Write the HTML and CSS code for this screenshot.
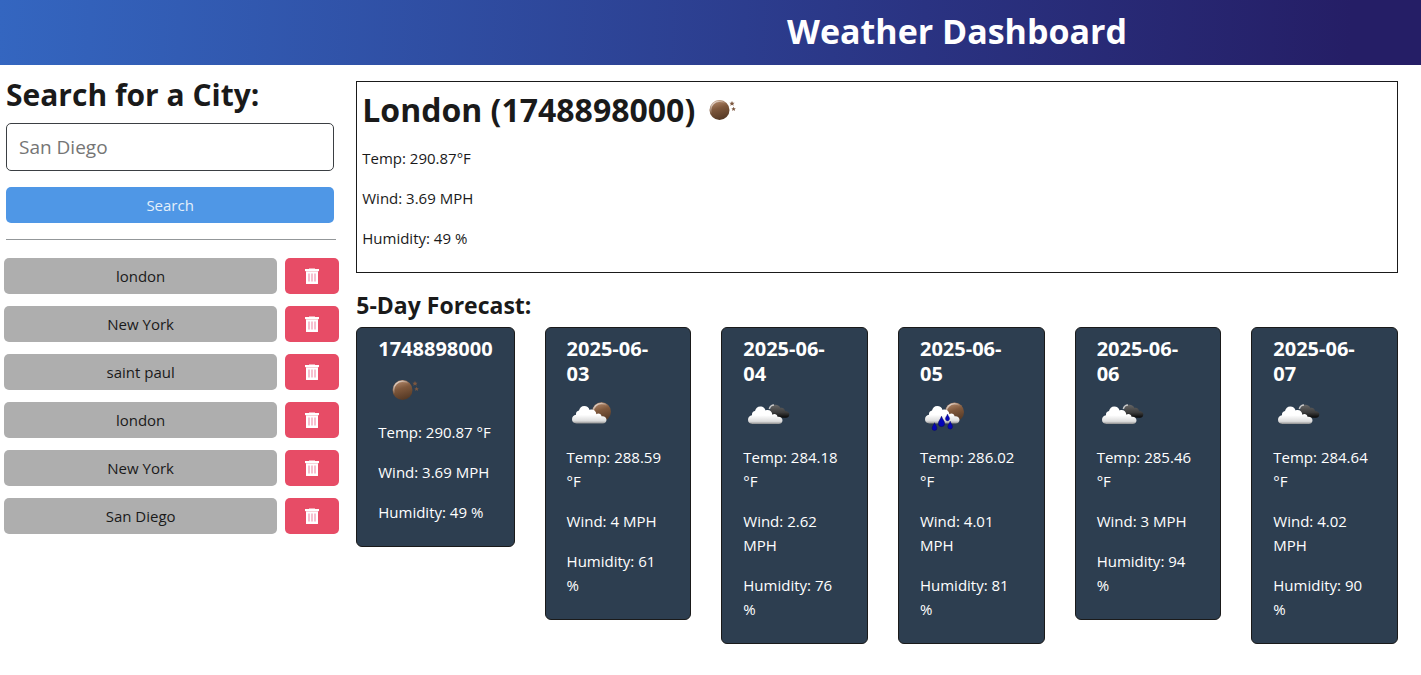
FILE: index.html
```
<!DOCTYPE html>
<html lang="en">
<head>
<meta charset="utf-8">
<meta name="viewport" content="width=device-width, initial-scale=1">
<title>Weather Dashboard</title>
<link rel="stylesheet" href="styles.css">
</head>
<body>
<svg class="sprite" aria-hidden="true">
  <defs>
    <linearGradient id="moonFill" x1="0.2" y1="0" x2="0.5" y2="1">
      <stop offset="0" stop-color="#b98e70"/>
      <stop offset="0.45" stop-color="#7f583c"/>
      <stop offset="1" stop-color="#553925"/>
    </linearGradient>
    <linearGradient id="moonShine" x1="0" y1="0" x2="0.6" y2="0.8">
      <stop offset="0" stop-color="#fff" stop-opacity="0.9"/>
      <stop offset="0.6" stop-color="#fff" stop-opacity="0"/>
    </linearGradient>
    <linearGradient id="cloudFill" x1="0" y1="0" x2="0" y2="1">
      <stop offset="0.5" stop-color="#fff"/>
      <stop offset="0.85" stop-color="#dcdcdc"/>
      <stop offset="1" stop-color="#8f8f8f"/>
    </linearGradient>
    <linearGradient id="darkFill" x1="0" y1="0" x2="0" y2="1">
      <stop offset="0" stop-color="#666"/>
      <stop offset="0.6" stop-color="#3c3c3c"/>
      <stop offset="1" stop-color="#080808"/>
    </linearGradient>
    <g id="disc">
      <circle r="10" fill="url(#moonFill)"/>
      <circle r="8.8" fill="none" stroke="url(#moonShine)" stroke-width="1.6"/>
    </g>
    <path id="cloud" d="M9.500 33.500C6.500 33.500 5 31.600 5 29.300C5 26.800 6.600 25.200 9 24.800C8.600 22.300 10.300 20.800 12 20.600C12.600 17.800 14.600 16 17.200 16C20 16 21.800 17.600 22.600 19.900C26 18.800 29 20.600 29.400 24.200C31.500 22.700 34.300 24 34.500 26.200C37.500 25.800 39.500 27.500 39.500 29.700C39.500 32 38 33.500 35.500 33.500Z" fill="url(#cloudFill)"/>
    <path id="drop" d="M0 0C.8 2.800 2.800 4.200 2.800 6.400A2.800 2.800 0 0 1-2.800 6.400C-2.800 4.200-.8 2.800 0 0Z" fill="#0505b8" stroke="#050560" stroke-width="0.5"/>
    <path id="star" d="M0-2.600L.8-.8L2.600-.7L1.200.5L1.700 2.300L0 1.300L-1.700 2.300L-1.200.5L-2.600-.7L-.8-.8Z" fill="#7c573f"/>
    <symbol id="clear" viewBox="0 0 50 50">
      <use href="#disc" x="24.5" y="25"/>
      <use href="#star" x="37" y="18.5"/>
      <use href="#star" transform="translate(38.6 24) scale(.85)"/>
    </symbol>
    <symbol id="few" viewBox="0 0 50 50">
      <use href="#disc" transform="translate(34.5 21.8) scale(.95)"/>
      <use href="#cloud"/>
    </symbol>
    <symbol id="broken" viewBox="0 0 50 50">
      <path d="M29 27.500C26 26 25.500 22 27.500 20C27.500 16.500 30 14.500 33 14.800C35.500 15 37 16.600 37.500 18C40 17.400 41.800 19 42 21C45 21 46.500 22.800 46.300 24.800C46.200 26.600 44.800 27.700 43 27.700Z" fill="url(#darkFill)"/>
      <path d="M26.300 19C27 16.500 29 15 31 15" fill="none" stroke="#c9c9c9" stroke-width="1.5"/>
      <use href="#cloud" y="0.5"/>
    </symbol>
    <symbol id="rain" viewBox="0 0 50 50">
      <use href="#disc" transform="translate(34.5 22) scale(.95)"/>
      <use href="#cloud"/>
      <use href="#drop" transform="translate(14.5 32.7) scale(.85)"/>
      <use href="#drop" transform="translate(21.5 26.3) scale(1.12)"/>
      <use href="#drop" transform="translate(27.5 24) scale(.75)"/>
      <use href="#drop" transform="translate(30.2 31.2) scale(.85)"/>
    </symbol>
    <symbol id="trash" viewBox="0 0 16 16">
      <path d="M5 1V.5h6V1h4v2H1V1Z" fill="#fff"/>
      <path d="M2 3h12v12.500a.5.500 0 0 1-.5.500h-11a.5.500 0 0 1-.5-.5Z" fill="#fff"/>
      <path d="M1.500 3.500h13" stroke="#f4b3c0" stroke-width=".6"/>
      <path d="M5 5.500v8M8 5.500v8M11 5.500v8" stroke="#f08ba8" stroke-width="1.1"/>
    </symbol>
  </defs>
</svg>

<header class="header"><h1 class="header-title">Weather Dashboard</h1></header>

<div class="layout">
  <aside class="sidebar">
    <form class="search">
      <label class="search-label" for="city">Search for a City:</label>
      <input class="search-input" id="city" type="text" placeholder="San Diego">
      <button class="search-button" type="button">Search</button>
    </form>
    <hr class="divider">
    <ul class="history">
      <li class="history-row"><button class="city" type="button">london</button><button class="delete" type="button" aria-label="Delete london"><svg class="trash"><use href="#trash"/></svg></button></li>
      <li class="history-row"><button class="city" type="button">New York</button><button class="delete" type="button" aria-label="Delete New York"><svg class="trash"><use href="#trash"/></svg></button></li>
      <li class="history-row"><button class="city" type="button">saint paul</button><button class="delete" type="button" aria-label="Delete saint paul"><svg class="trash"><use href="#trash"/></svg></button></li>
      <li class="history-row"><button class="city" type="button">london</button><button class="delete" type="button" aria-label="Delete london"><svg class="trash"><use href="#trash"/></svg></button></li>
      <li class="history-row"><button class="city" type="button">New York</button><button class="delete" type="button" aria-label="Delete New York"><svg class="trash"><use href="#trash"/></svg></button></li>
      <li class="history-row"><button class="city" type="button">San Diego</button><button class="delete" type="button" aria-label="Delete San Diego"><svg class="trash"><use href="#trash"/></svg></button></li>
    </ul>
  </aside>

  <main class="main">
    <section class="today">
      <h2 class="today-title">London (1748898000)<svg class="today-icon" viewBox="0 5 50 40"><use href="#clear" width="50" height="50"/></svg></h2>
      <p class="reading">Temp: 290.87°F</p>
      <p class="reading">Wind: 3.69 MPH</p>
      <p class="reading">Humidity: 49 %</p>
    </section>
    <h2 class="forecast-title">5-Day Forecast:</h2>
    <section class="forecast">
      <article class="card">
        <h3 class="card-date">1748898000</h3>
        <svg class="card-icon"><use href="#clear"/></svg>
        <p class="reading">Temp: 290.87 °F</p>
        <p class="reading">Wind: 3.69 MPH</p>
        <p class="reading">Humidity: 49 %</p>
      </article>
      <article class="card">
        <h3 class="card-date">2025-06-03</h3>
        <svg class="card-icon"><use href="#few"/></svg>
        <p class="reading">Temp: 288.59 °F</p>
        <p class="reading">Wind: 4 MPH</p>
        <p class="reading">Humidity: 61 %</p>
      </article>
      <article class="card">
        <h3 class="card-date">2025-06-04</h3>
        <svg class="card-icon"><use href="#broken"/></svg>
        <p class="reading">Temp: 284.18 °F</p>
        <p class="reading">Wind: 2.62 MPH</p>
        <p class="reading">Humidity: 76 %</p>
      </article>
      <article class="card">
        <h3 class="card-date">2025-06-05</h3>
        <svg class="card-icon"><use href="#rain"/></svg>
        <p class="reading">Temp: 286.02 °F</p>
        <p class="reading">Wind: 4.01 MPH</p>
        <p class="reading">Humidity: 81 %</p>
      </article>
      <article class="card">
        <h3 class="card-date">2025-06-06</h3>
        <svg class="card-icon"><use href="#broken"/></svg>
        <p class="reading">Temp: 285.46 °F</p>
        <p class="reading">Wind: 3 MPH</p>
        <p class="reading">Humidity: 94 %</p>
      </article>
      <article class="card">
        <h3 class="card-date">2025-06-07</h3>
        <svg class="card-icon"><use href="#broken"/></svg>
        <p class="reading">Temp: 284.64 °F</p>
        <p class="reading">Wind: 4.02 MPH</p>
        <p class="reading">Humidity: 90 %</p>
      </article>
    </section>
  </main>
</div>
</body>
</html>
```
FILE: styles.css
```
* {
  box-sizing: border-box;
}

body {
  margin: 0;
  background: #fff;
  color: #1a1a1a;
  font-family: "Open Sans", "Noto Sans", sans-serif;
  font-size: 15px;
  line-height: 24px;
}

button,
input {
  font: inherit;
}

.sprite {
  display: block;
  width: 0;
  height: 0;
}

.header {
  padding: 7px 0 10px 34.7%;
  background: linear-gradient(92deg, #3466c0, #2a3382 65%, #251e66 95%);
  color: #fff;
  text-align: center;
}

.header-title {
  margin: 0;
  font-size: 34px;
  line-height: 48px;
}

.layout {
  display: grid;
  grid-template-columns: minmax(0, 1fr) minmax(0, 3fr);
}

.sidebar {
  padding: 10px 16px 0 4px;
}

.search {
  display: flex;
  flex-direction: column;
  margin: 0 5px 0 2px;
}

.search-label {
  margin-bottom: 8px;
  font-size: 30px;
  font-weight: 700;
  line-height: 40px;
}

.search-input {
  width: 100%;
  height: 48px;
  margin-bottom: 16px;
  padding: 0 12px;
  border: 1px solid #3b3f43;
  border-radius: 5px;
  background: #fff;
  color: #1a1a1a;
  font-size: 19px;
}

.search-input::placeholder {
  color: #757575;
  opacity: 1;
}

.search-button {
  height: 36px;
  border: 0;
  border-radius: 5px;
  background: #4f97e6;
  color: #e4effa;
}

.divider {
  margin: 16px 3px 18px 2px;
  border: 0;
  border-top: 1px solid #939799;
}

.history {
  display: flex;
  flex-direction: column;
  gap: 12px;
  margin: 0;
  padding: 0;
  list-style: none;
}

.history-row {
  display: grid;
  grid-template-columns: minmax(0, 1fr) 54px;
  gap: 8px;
}

.city,
.delete {
  height: 36px;
  padding: 0;
  border: 0;
  border-radius: 5px;
}

.city {
  background: #aeaeae;
  color: #1a1a1a;
}

.delete {
  display: flex;
  align-items: center;
  justify-content: center;
  background: #e74c66;
}

.trash {
  width: 16px;
  height: 16px;
}

.main {
  padding: 16px 23px 0 1px;
}

.today {
  padding: 8px 5px 6px;
  border: 1px solid #1a1a1a;
}

.today-title {
  display: flex;
  margin: 0 0 16px;
  font-size: 32px;
  line-height: 40px;
}

.today-icon {
  width: 50px;
  height: 40px;
}

.reading {
  margin: 0 0 16px;
}

.forecast-title {
  margin: 17px 0 7px;
  font-size: 23px;
  line-height: 30px;
}

.forecast {
  display: flex;
  align-items: flex-start;
  gap: 30px;
}

.card {
  flex: 1 1 0;
  padding: 8px 21px 6px;
  border: 1px solid #1a1a1a;
  border-radius: 6px;
  background: #2d3e50;
  color: #fff;
}

.card-date {
  margin: 0;
  font-size: 20px;
  line-height: 25px;
}

.card-icon {
  display: block;
  width: 50px;
  height: 50px;
  margin: 4px 0 5px;
}
```
